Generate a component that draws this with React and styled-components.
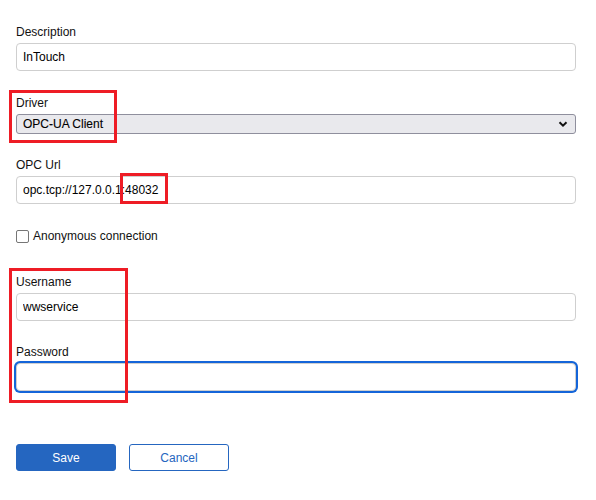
import React, { useState } from "react";
import styled, { createGlobalStyle } from "styled-components";

const GlobalStyle = createGlobalStyle`
  body {
    margin: 0;
    background: #fff;
    font-family: "Liberation Sans", Arial, sans-serif;
    color: #111;
  }
`;

const App = () => {
  const [anon, setAnon] = useState(false);
  return (
    <>
      <GlobalStyle />
      <Page>
        <Form>
          <Field>
            <Label>Description</Label>
            <Input defaultValue="InTouch" />
          </Field>

          <Field $top={25}>
            <Label>Driver</Label>
            <SelectBox>
              <span>OPC-UA Client</span>
              <svg width="10" height="8" viewBox="0 0 10 8">
                <path d="M1.5 2.2 L5 5.6 L8.5 2.2" fill="none" stroke="#111" strokeWidth="2" />
              </svg>
            </SelectBox>
          </Field>

          <Field $top={24}>
            <Label>OPC Url</Label>
            <Input defaultValue="opc.tcp://127.0.0.1:48032" />
          </Field>

          <CheckRow>
            <CheckBox checked={anon} onClick={() => setAnon(!anon)} />
            <span>Anonymous connection</span>
          </CheckRow>

          <Field $top={32}>
            <Label>Username</Label>
            <Input defaultValue="wwservice" />
          </Field>

          <Field $top={24}>
            <Label>Password</Label>
            <Input type="password" $focused />
          </Field>

          <Buttons>
            <Button $primary>Save</Button>
            <Button>Cancel</Button>
          </Buttons>
        </Form>

        <Marker style={{ left: 9, top: 90, width: 108, height: 53 }} />
        <Marker style={{ left: 120, top: 173, width: 48, height: 31 }} />
        <Marker style={{ left: 9, top: 268, width: 119, height: 135 }} />
      </Page>
    </>
  );
};

const Page = styled.div`
  position: relative;
  width: 596px;
  height: 500px;
  padding: 25px 20px 0 16px;
  box-sizing: border-box;
`;

const Form = styled.div`
  display: flex;
  flex-direction: column;
`;

const Field = styled.div`
  display: flex;
  flex-direction: column;
  gap: 4px;
  margin-top: ${(p) => p.$top || 0}px;
`;

const Label = styled.label`
  font-size: 12px;
  line-height: 14px;
  color: #111;
`;

const Input = styled.input`
  box-sizing: border-box;
  width: 100%;
  height: 28px;
  padding: 0 6px;
  font-family: "Liberation Sans", Arial, sans-serif;
  font-size: 12px;
  color: #000;
  background: #fff;
  border: 1px solid #cfcfcf;
  border-radius: 4px;
  outline: none;
  box-shadow: ${(p) => (p.$focused ? "0 0 0 2px #1465d9" : "none")};
`;

const SelectBox = styled.div`
  box-sizing: border-box;
  height: 20px;
  padding: 0 7px 0 6px;
  display: flex;
  align-items: center;
  justify-content: space-between;
  font-size: 12px;
  color: #000;
  background: #e9e9ed;
  border: 1px solid #8f8f9d;
  border-radius: 3px;
  -webkit-text-stroke: 0.1px #000;
`;

const CheckRow = styled.label`
  display: flex;
  align-items: center;
  gap: 4px;
  margin-top: 25px;
  font-size: 12px;
  line-height: 14px;
  color: #111;
`;

const CheckBox = styled.span`
  box-sizing: border-box;
  width: 13px;
  height: 13px;
  border: 1px solid #767676;
  border-radius: 2px;
  background: ${(p) => (p.checked ? "#1465d9" : "#fff")};
`;

const Buttons = styled.div`
  display: flex;
  gap: 13px;
  margin-top: 53px;
`;

const Button = styled.button`
  box-sizing: border-box;
  width: 100px;
  height: 27px;
  font-family: "Liberation Sans", Arial, sans-serif;
  font-size: 12px;
  border-radius: 3px;
  cursor: pointer;
  color: ${(p) => (p.$primary ? "#fff" : "#2566c0")};
  background: ${(p) => (p.$primary ? "#2566c0" : "#fff")};
  border: 1px solid #2566c0;
`;

const Marker = styled.div`
  position: absolute;
  box-sizing: border-box;
  border: 3px solid #ee1c25;
  pointer-events: none;
`;

export default App;
